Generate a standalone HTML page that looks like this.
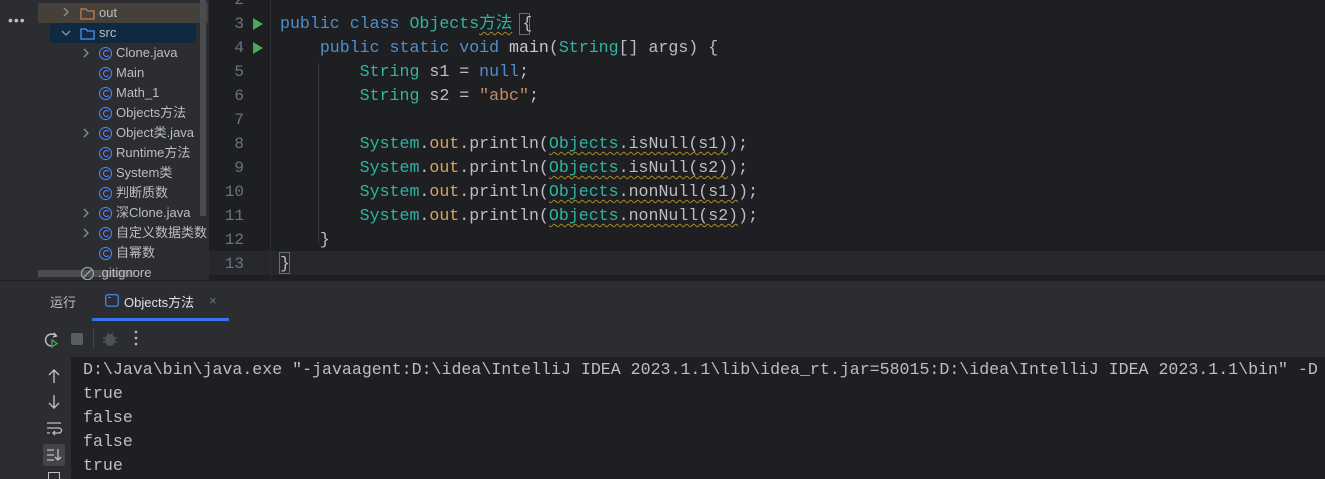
<!DOCTYPE html>
<html><head><meta charset="utf-8"><style>
*{margin:0;padding:0;box-sizing:border-box}
body{width:1325px;height:479px;overflow:hidden;background:#2b2d30;position:relative;font-family:"Liberation Sans","Noto Sans CJK SC",sans-serif;color:#bcbec4}
.abs{position:absolute}
.tree{font-size:13px;color:#bcbec4}
.row{position:absolute;height:20px;line-height:20px;white-space:nowrap;display:flex;align-items:center}
.ci{flex:none;display:block;width:13px;height:13px;border:1.5px solid #548af7;border-radius:50%;margin-right:4px;position:relative}
.ci:after{content:"";position:absolute;left:2.5px;top:2.5px;width:5px;height:5px;border:1.3px solid #548af7;border-right-color:transparent;border-radius:50%}
.chev{position:absolute}
.code{font-family:"Liberation Mono","Noto Sans CJK SC",monospace;font-size:16.6px;white-space:pre;line-height:24px}
.ln{position:absolute;width:36px;text-align:right;left:208px;font-family:"Liberation Mono",monospace;font-size:16px;color:#6f737a;line-height:24px}
.kw{color:#4f8fcf}.ty{color:#2fb5a0}.st{color:#c98a63}.fn{color:#c9c9c9}.fd{color:#d6a45c}.w{color:#bcbec4}
.sq{text-decoration:underline wavy #a68a2b;text-decoration-thickness:1px;text-underline-offset:3px}
.con{font-family:"Liberation Mono",monospace;font-size:16.6px;white-space:pre;line-height:24px;color:#bcbec4}
</style></head><body>
<div class="abs" style="left:8px;top:12px;color:#bcbec4;font-size:14px;letter-spacing:1px">•••</div>
<div class="abs" style="left:38px;top:0;width:170px;height:280px;background:#2b2d30"></div>
<div class="abs" style="left:38px;top:3px;width:170px;height:20px;background:#45403a"></div>
<div class="abs" style="left:50px;top:23px;width:146px;height:20px;background:#0f2a40;border-radius:3px"></div>
<div class="abs" style="left:200px;top:0;width:6px;height:216px;background:#4a4c50"></div>
<div class="abs" style="left:38px;top:270px;width:96px;height:7px;background:#4a4c50"></div>
<div class="tree">
<svg class="chev" style="left:62px;top:7px" width="8" height="10"><path d="M2 1l4 4-4 4" fill="none" stroke="#8c8f94" stroke-width="1.3"/></svg>
<div class="row" style="left:80px;top:3px"><svg width="15" height="13" style="margin-right:4px"><path d="M1 2h5l1.5 2H14v8H1z" fill="none" stroke="#c77b4c" stroke-width="1.3"/></svg>out</div>
<svg class="chev" style="left:61px;top:29px" width="10" height="8"><path d="M1 2l4 4 4-4" fill="none" stroke="#8c8f94" stroke-width="1.3"/></svg>
<div class="row" style="left:80px;top:23px"><svg width="15" height="13" style="margin-right:4px"><path d="M1 2h5l1.5 2H14v8H1z" fill="none" stroke="#548af7" stroke-width="1.3"/></svg>src</div>
<svg class="chev" style="left:82px;top:48px" width="8" height="10"><path d="M2 1l4 4-4 4" fill="none" stroke="#8c8f94" stroke-width="1.3"/></svg>
<div class="row" style="left:99px;top:43px"><span class="ci"></span>Clone.java</div>
<div class="row" style="left:99px;top:63px"><span class="ci"></span>Main</div>
<div class="row" style="left:99px;top:83px"><span class="ci"></span>Math_1</div>
<div class="row" style="left:99px;top:103px"><span class="ci"></span>Objects方法</div>
<svg class="chev" style="left:82px;top:128px" width="8" height="10"><path d="M2 1l4 4-4 4" fill="none" stroke="#8c8f94" stroke-width="1.3"/></svg>
<div class="row" style="left:99px;top:123px"><span class="ci"></span>Object类.java</div>
<div class="row" style="left:99px;top:143px"><span class="ci"></span>Runtime方法</div>
<div class="row" style="left:99px;top:163px"><span class="ci"></span>System类</div>
<div class="row" style="left:99px;top:183px"><span class="ci"></span>判断质数</div>
<svg class="chev" style="left:82px;top:208px" width="8" height="10"><path d="M2 1l4 4-4 4" fill="none" stroke="#8c8f94" stroke-width="1.3"/></svg>
<div class="row" style="left:99px;top:203px"><span class="ci"></span>深Clone.java</div>
<svg class="chev" style="left:82px;top:228px" width="8" height="10"><path d="M2 1l4 4-4 4" fill="none" stroke="#8c8f94" stroke-width="1.3"/></svg>
<div class="row" style="left:99px;top:223px;width:109px;overflow:hidden"><span class="ci"></span>自定义数据类数</div>
<div class="row" style="left:99px;top:243px"><span class="ci"></span>自幂数</div>
<div class="row" style="left:80px;top:263px"><svg width="15" height="15" style="margin-right:3px"><circle cx="7.5" cy="7.5" r="6" fill="none" stroke="#9a9da2" stroke-width="1.3"/><path d="M3.5 11.5l8-8" stroke="#9a9da2" stroke-width="1.3"/></svg>.gitignore</div>
</div>
<div class="abs" style="left:209px;top:0;width:1116px;height:280px;background:#1e1f22"></div>
<div class="abs" style="left:209px;top:251px;width:1116px;height:24px;background:#26282e"></div>
<div class="abs" style="left:270px;top:0;width:1px;height:280px;background:#2b2d30"></div>
<div class="abs" style="left:318px;top:63px;width:1px;height:180px;background:#393b40"></div>
<div class="ln" style="top:-12px">2</div>
<div class="ln" style="top:12px">3</div><div class="ln" style="top:36px">4</div><div class="ln" style="top:60px">5</div><div class="ln" style="top:84px">6</div><div class="ln" style="top:108px">7</div><div class="ln" style="top:132px">8</div><div class="ln" style="top:156px">9</div><div class="ln" style="top:180px">10</div><div class="ln" style="top:204px">11</div><div class="ln" style="top:228px">12</div><div class="ln" style="top:252px">13</div>
<svg class="abs" style="left:252px;top:18px" width="11" height="12"><path d="M1 0l10 6-10 6z" fill="#4aa85a"/></svg>
<svg class="abs" style="left:252px;top:42px" width="11" height="12"><path d="M1 0l10 6-10 6z" fill="#4aa85a"/></svg>
<div class="abs" style="left:519px;top:13px;width:11px;height:22px;border:1px solid #6a6d72"></div>
<div class="abs" style="left:279px;top:252px;width:11px;height:22px;border:1px solid #6a6d72"></div>
<div class="abs code" style="left:280px;top:12px"><span class="kw">public class </span><span class="ty">Objects<span class="sq" style="color:#2fb5a0">方法</span></span> <span class="w">{</span>
<span class="kw">    public static void </span><span class="fn">main</span><span class="w">(</span><span class="ty">String</span><span class="w">[] args) {</span>
<span class="ty">        String </span><span class="w">s1 = </span><span class="kw">null</span><span class="w">;</span>
<span class="ty">        String </span><span class="w">s2 = </span><span class="st">"abc"</span><span class="w">;</span>

<span class="ty">        System</span><span class="w">.</span><span class="fd">out</span><span class="w">.println(</span><span class="sq"><span class="ty">Objects</span><span class="w">.isNull(s1)</span></span><span class="w">);</span>
<span class="ty">        System</span><span class="w">.</span><span class="fd">out</span><span class="w">.println(</span><span class="sq"><span class="ty">Objects</span><span class="w">.isNull(s2)</span></span><span class="w">);</span>
<span class="ty">        System</span><span class="w">.</span><span class="fd">out</span><span class="w">.println(</span><span class="sq"><span class="ty">Objects</span><span class="w">.nonNull(s1)</span></span><span class="w">);</span>
<span class="ty">        System</span><span class="w">.</span><span class="fd">out</span><span class="w">.println(</span><span class="sq"><span class="ty">Objects</span><span class="w">.nonNull(s2)</span></span><span class="w">);</span>
<span class="w">    }</span>
<span class="w">}</span></div>
<div class="abs" style="left:0;top:280px;width:1325px;height:1px;background:#1e1f22"></div>
<div class="abs" style="left:50px;top:292px;font-size:13px;color:#bcbec4">运行</div>
<svg class="abs" style="left:105px;top:294px" width="14" height="13"><rect x="0.7" y="0.7" width="12.5" height="11.5" rx="2" fill="none" stroke="#548af7" stroke-width="1.2"/><path d="M3 3.5h3" stroke="#548af7"/></svg>
<div class="abs" style="left:124px;top:292px;font-size:13px;color:#dfe1e5">Objects方法</div>
<div class="abs" style="left:209px;top:293px;font-size:13px;color:#6f737a">×</div>
<div class="abs" style="left:92px;top:318px;width:137px;height:3px;background:#3574f0;border-radius:1px"></div>
<svg class="abs" style="left:43px;top:331px" width="18" height="18"><path d="M13 5A6 6 0 1 0 8 15" fill="none" stroke="#bcbec4" stroke-width="1.5"/><path d="M11 2l2.5 3L10 6" fill="none" stroke="#bcbec4" stroke-width="1.4"/><path d="M9 9v7l5-3.5z" fill="none" stroke="#4aa85a" stroke-width="1.3"/></svg>
<div class="abs" style="left:71px;top:333px;width:12px;height:12px;background:#5a5d63;border-radius:2px"></div>
<div class="abs" style="left:93px;top:328px;width:1px;height:20px;background:#43454a"></div>
<svg class="abs" style="left:101px;top:330px" width="18" height="18"><ellipse cx="9" cy="10" rx="5" ry="6" fill="#4e5157"/><path d="M2 8h3M13 8h3M2 12h3M13 12h3M6 3l2 2M12 3l-2 2" stroke="#4e5157" stroke-width="1.4"/></svg>
<svg class="abs" style="left:134px;top:330px" width="4" height="16"><circle cx="2" cy="2" r="1.3" fill="#bcbec4"/><circle cx="2" cy="8" r="1.3" fill="#bcbec4"/><circle cx="2" cy="14" r="1.3" fill="#bcbec4"/></svg>
<div class="abs" style="left:71px;top:357px;width:1254px;height:122px;background:#1e1f22;overflow:hidden">
<div class="abs con" style="left:12px;top:1px">D:\Java\bin\java.exe "-javaagent:D:\idea\IntelliJ IDEA 2023.1.1\lib\idea_rt.jar=58015:D:\idea\IntelliJ IDEA 2023.1.1\bin" -D
true
false
false
true</div></div>
<svg class="abs" style="left:46px;top:368px" width="16" height="16"><path d="M8 2v13M3 7l5-5 5 5" fill="none" stroke="#bcbec4" stroke-width="1.4"/></svg>
<svg class="abs" style="left:46px;top:394px" width="16" height="16"><path d="M8 1v13M3 9l5 5 5-5" fill="none" stroke="#bcbec4" stroke-width="1.4"/></svg>
<svg class="abs" style="left:45px;top:420px" width="18" height="18"><path d="M2 3h14M2 8h12a2.5 2.5 0 0 1 0 5H8M2 13h3M10 11l-2 2 2 2" fill="none" stroke="#bcbec4" stroke-width="1.3"/></svg>
<div class="abs" style="left:43px;top:444px;width:22px;height:22px;background:#43454a;border-radius:2px"></div>
<svg class="abs" style="left:45px;top:446px" width="18" height="18"><path d="M2 4h7M2 9h7M2 14h7M13 3v11M10 11l3 3 3-3" fill="none" stroke="#bcbec4" stroke-width="1.3"/></svg>
<div class="abs" style="left:48px;top:472px;width:12px;height:7px;border:1.4px solid #bcbec4;border-bottom:none"></div>
</body></html>
